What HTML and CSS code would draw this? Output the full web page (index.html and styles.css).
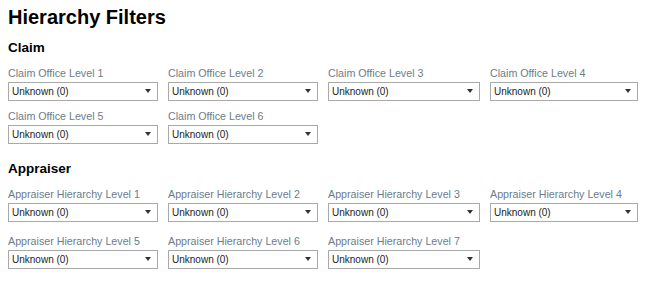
FILE: index.html
```html
<!DOCTYPE html>
<html lang="en">
<head>
    <meta charset="UTF-8">
    <meta name="viewport" content="width=device-width, initial-scale=1.0">
    <title>Hierarchy Filters</title>
    <link rel="stylesheet" href="styles.css">
</head>
<body>
    <h2 class="title">Hierarchy Filters</h2>

    <div class="section">
        <h3 class="section-title">Claim</h3>
        <div class="filters">
            <div class="field">
                <label class="label">Claim Office Level 1</label>
                <div class="select"><select><option>Unknown (0)</option></select></div>
            </div>
            <div class="field">
                <label class="label">Claim Office Level 2</label>
                <div class="select"><select><option>Unknown (0)</option></select></div>
            </div>
            <div class="field">
                <label class="label">Claim Office Level 3</label>
                <div class="select"><select><option>Unknown (0)</option></select></div>
            </div>
            <div class="field">
                <label class="label">Claim Office Level 4</label>
                <div class="select"><select><option>Unknown (0)</option></select></div>
            </div>
            <div class="field">
                <label class="label">Claim Office Level 5</label>
                <div class="select"><select><option>Unknown (0)</option></select></div>
            </div>
            <div class="field">
                <label class="label">Claim Office Level 6</label>
                <div class="select"><select><option>Unknown (0)</option></select></div>
            </div>
        </div>
    </div>

    <div class="section">
        <h3 class="section-title">Appraiser</h3>
        <div class="filters filters-loose">
            <div class="field">
                <label class="label">Appraiser Hierarchy Level 1</label>
                <div class="select"><select><option>Unknown (0)</option></select></div>
            </div>
            <div class="field">
                <label class="label">Appraiser Hierarchy Level 2</label>
                <div class="select"><select><option>Unknown (0)</option></select></div>
            </div>
            <div class="field">
                <label class="label">Appraiser Hierarchy Level 3</label>
                <div class="select"><select><option>Unknown (0)</option></select></div>
            </div>
            <div class="field">
                <label class="label">Appraiser Hierarchy Level 4</label>
                <div class="select"><select><option>Unknown (0)</option></select></div>
            </div>
            <div class="field">
                <label class="label">Appraiser Hierarchy Level 5</label>
                <div class="select"><select><option>Unknown (0)</option></select></div>
            </div>
            <div class="field">
                <label class="label">Appraiser Hierarchy Level 6</label>
                <div class="select"><select><option>Unknown (0)</option></select></div>
            </div>
            <div class="field">
                <label class="label">Appraiser Hierarchy Level 7</label>
                <div class="select"><select><option>Unknown (0)</option></select></div>
            </div>
        </div>
    </div>
</body>
</html>
```

FILE: styles.css
```css
body {
    margin: 0;
    padding: 5px 8px;
    background-color: #fff;
    color: #000;
    font-family: "Liberation Sans", Arial, sans-serif;
}
.title {
    margin: 0;
    font-size: 20px;
    line-height: 24px;
    font-weight: bold;
}
.section {
    margin-top: 11px;
}
.section + .section {
    margin-top: 18px;
}
.section-title {
    margin: 0 0 10px 0;
    font-size: 13.5px;
    line-height: 16px;
    font-weight: bold;
}
.filters {
    display: grid;
    grid-template-columns: 150px 150px 152px 148px;
    column-gap: 10px;
    row-gap: 9px;
}
.filters-loose {
    row-gap: 13px;
}
.field {
    display: flex;
    flex-direction: column;
}
.label {
    font-size: 10.7px;
    line-height: 14px;
    color: #6b7c8c;
    margin-bottom: 1px;
    white-space: nowrap;
}
.select {
    position: relative;
    height: 19px;
}
.select select {
    -webkit-appearance: none;
    appearance: none;
    width: 100%;
    height: 19px;
    margin: 0;
    padding: 0 16px 0 3px;
    border: 1px solid #a9a9a9;
    border-radius: 0;
    background-color: #fff;
    color: #222;
    font-family: "Liberation Sans", Arial, sans-serif;
    font-size: 10px;
    box-sizing: border-box;
}
.select::after {
    content: "";
    position: absolute;
    right: 7px;
    top: 8px;
    border-left: 3.5px solid transparent;
    border-right: 3.5px solid transparent;
    border-top: 4px solid #333;
    pointer-events: none;
}
```
